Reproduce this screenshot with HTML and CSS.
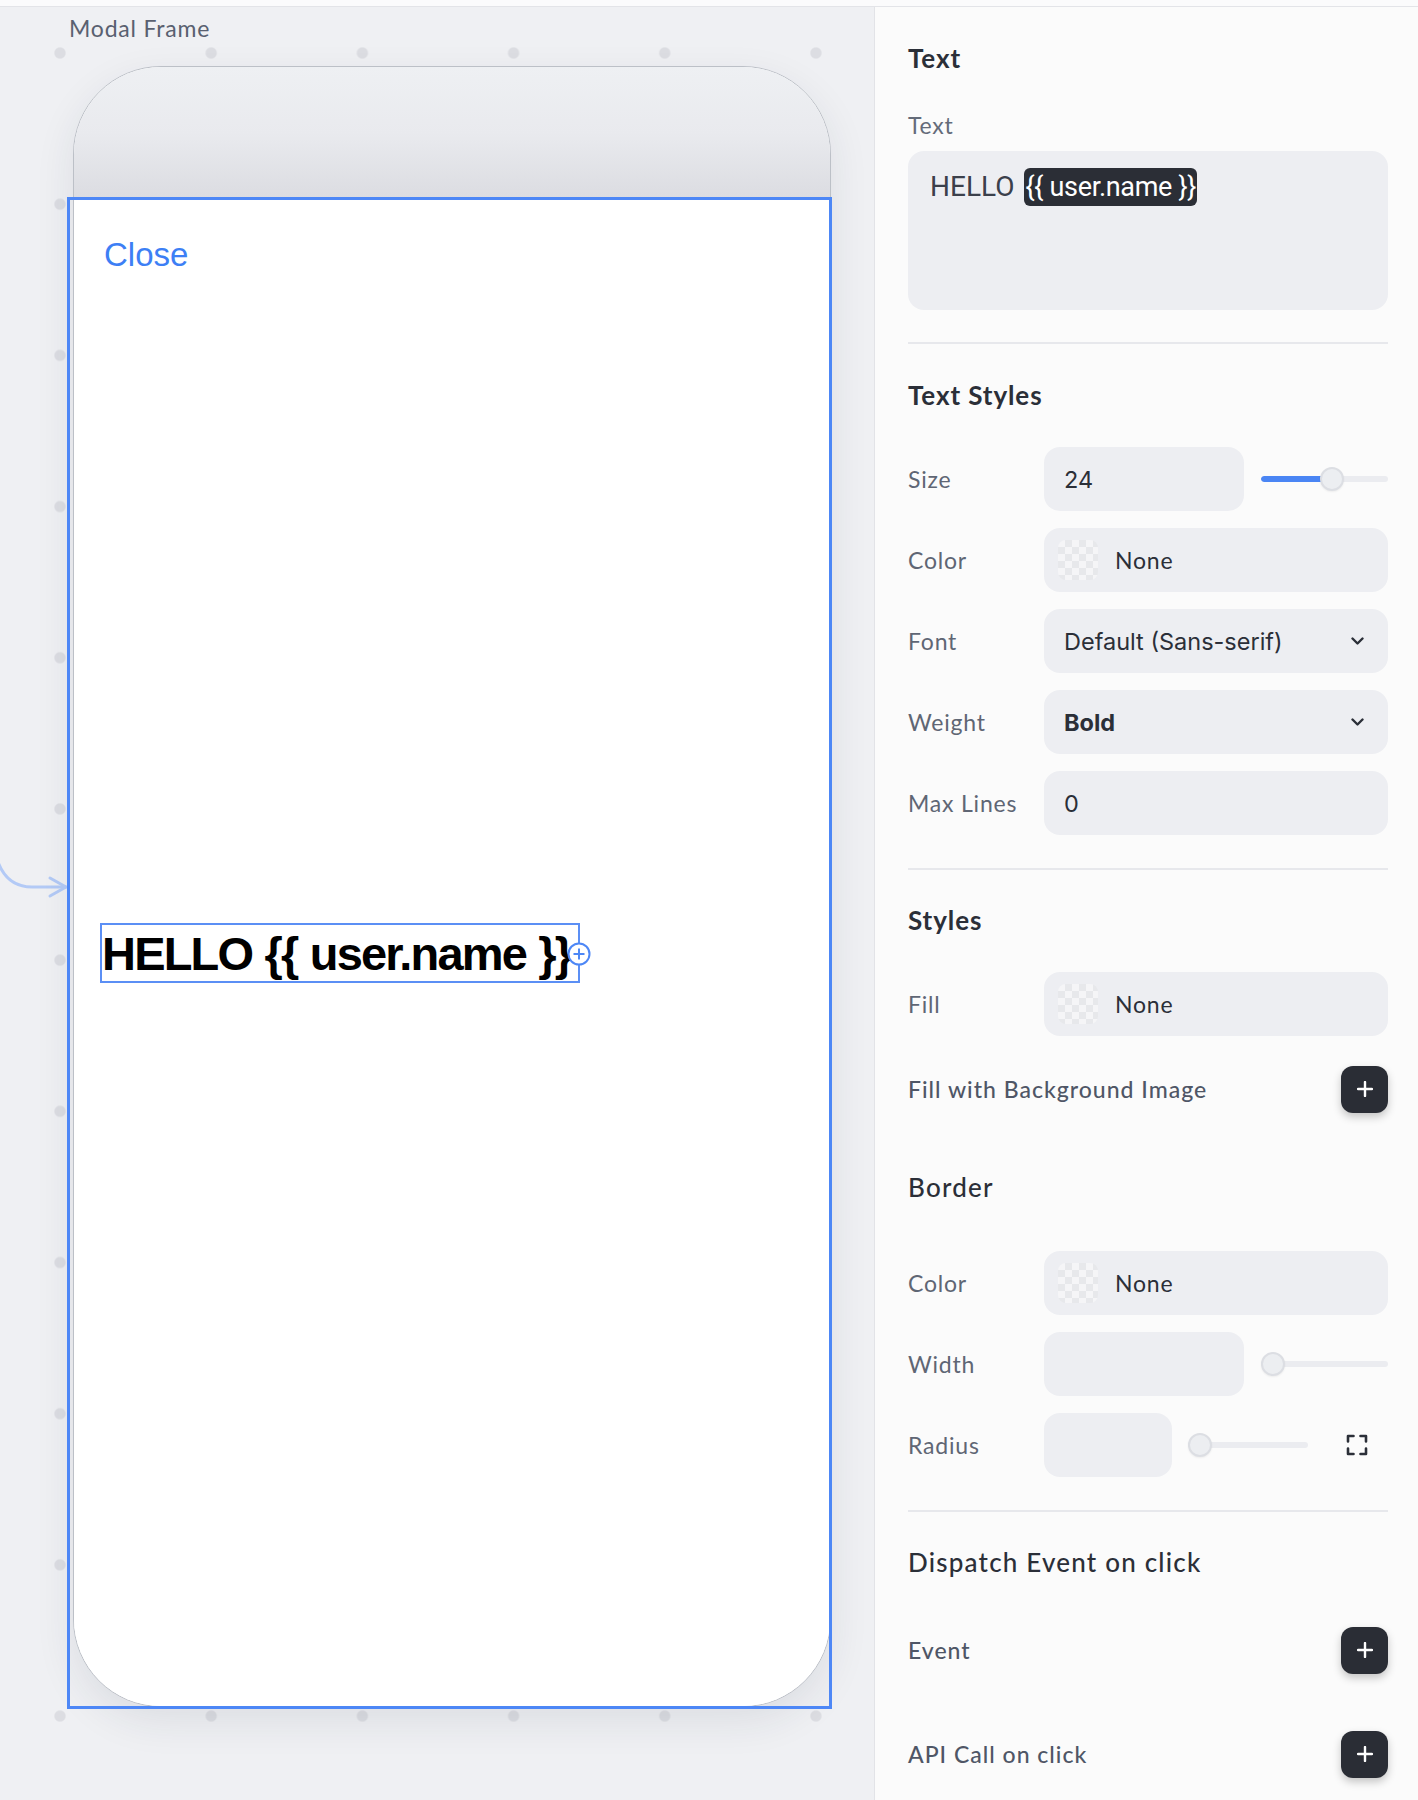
FILE: index.html
```html
<!DOCTYPE html>
<html lang="en">
<head>
<meta charset="utf-8">
<title>Modal Frame – Text properties</title>
<link rel="stylesheet" href="styles.css">
</head>
<body>
<div class="topbar"></div>
<div class="main">
  <section class="canvas">
    <div class="frame-label">Modal Frame</div>
    <svg class="connector" width="80" height="80" viewBox="0 0 80 80">
      <path d="M-6 13 C-2 39 10 54 32 54 L66 54" />
      <path d="M50 45 L66 54 L50 63" />
    </svg>
    <div class="phone">
      <div class="phone-head"></div>
      <div class="sheet">
        <div class="close">Close</div>
        <div class="text-node">HELLO {{ user.name }}<span class="add-handle"><svg width="24" height="24" viewBox="0 0 24 24"><circle cx="12" cy="12" r="10.5"/><path d="M12 6.5v11M6.5 12h11"/></svg></span></div>
      </div>
    </div>
    <div class="selection"></div>
  </section>

  <aside class="panel">
    <h2 class="sec-title">Text</h2>
    <div class="field-label">Text</div>
    <div class="textarea"><span class="plain">HELLO </span><span class="token">{{ user.name }}</span></div>
    <div class="divider"></div>

    <h2 class="sec-title sp-35">Text Styles</h2>
    <div class="rows sp-36">
      <div class="row">
        <span class="label">Size</span>
        <div class="control">
          <div class="input w200 value">24</div>
          <div class="slider ml17"><span class="track"><span class="fill" style="width:71px"></span></span><span class="thumb" style="left:59px"></span></div>
        </div>
      </div>
      <div class="row">
        <span class="label">Color</span>
        <div class="control">
          <div class="input full swatch-input"><span class="swatch"></span><span class="none">None</span></div>
        </div>
      </div>
      <div class="row">
        <span class="label">Font</span>
        <div class="control">
          <div class="input full select"><span class="value">Default (Sans-serif)</span><svg class="chev" width="13" height="8" viewBox="0 0 13 8"><path d="M1.5 1.5l5 5 5-5"/></svg></div>
        </div>
      </div>
      <div class="row">
        <span class="label">Weight</span>
        <div class="control">
          <div class="input full select"><span class="value bold">Bold</span><svg class="chev" width="13" height="8" viewBox="0 0 13 8"><path d="M1.5 1.5l5 5 5-5"/></svg></div>
        </div>
      </div>
      <div class="row">
        <span class="label">Max Lines</span>
        <div class="control">
          <div class="input full value">0</div>
        </div>
      </div>
    </div>
    <div class="divider sp-33"></div>

    <h2 class="sec-title sp-34">Styles</h2>
    <div class="rows sp-36">
      <div class="row">
        <span class="label">Fill</span>
        <div class="control">
          <div class="input full swatch-input"><span class="swatch"></span><span class="none">None</span></div>
        </div>
      </div>
    </div>
    <div class="action-row sp-29">
      <span class="action-label">Fill with Background Image</span>
      <button class="add-btn" type="button"><svg width="16" height="16" viewBox="0 0 16 16"><path d="M8 1v14M1 8h14"/></svg></button>
    </div>

    <h2 class="sec-title medium sp-58">Border</h2>
    <div class="rows sp-48">
      <div class="row">
        <span class="label">Color</span>
        <div class="control">
          <div class="input full swatch-input"><span class="swatch"></span><span class="none">None</span></div>
        </div>
      </div>
      <div class="row">
        <span class="label">Width</span>
        <div class="control">
          <div class="input w200"></div>
          <div class="slider ml17"><span class="track"></span><span class="thumb" style="left:0"></span></div>
        </div>
      </div>
      <div class="row">
        <span class="label">Radius</span>
        <div class="control">
          <div class="input w128"></div>
          <div class="slider ml16 w120"><span class="track"></span><span class="thumb" style="left:0"></span></div>
          <svg class="expand" width="22" height="22" viewBox="0 0 22 22"><path d="M2 7.5V2h5.5M14.5 2H20v5.5M20 14.5V20h-5.5M7.5 20H2v-5.5"/></svg>
        </div>
      </div>
    </div>
    <div class="divider sp-33"></div>

    <h2 class="sec-title medium sp-34">Dispatch Event on click</h2>
    <div class="action-row sp-48">
      <span class="action-label">Event</span>
      <button class="add-btn" type="button"><svg width="16" height="16" viewBox="0 0 16 16"><path d="M8 1v14M1 8h14"/></svg></button>
    </div>
    <div class="action-row sp-56">
      <span class="action-label">API Call on click</span>
      <button class="add-btn" type="button"><svg width="16" height="16" viewBox="0 0 16 16"><path d="M8 1v14M1 8h14"/></svg></button>
    </div>
  </aside>
</div>
</body>
</html>
```

FILE: styles.css
```css
* { box-sizing: border-box; }

html, body {
  margin: 0;
  padding: 0;
}

body {
  width: 1418px;
  height: 1800px;
  overflow: hidden;
  font-family: Lato, "Noto Sans", sans-serif;
  background: #eff0f3;
}

.topbar {
  height: 7px;
  background: #fbfbfc;
  border-bottom: 1px solid #e3e4e8;
}

.main {
  display: flex;
  height: 1793px;
}

/* ---------- canvas ---------- */
.canvas {
  position: relative;
  flex: 0 0 874px;
  overflow: hidden;
  background-color: #eff0f3;
  background-image: radial-gradient(circle at center, #dcdde2 0, #dcdde2 5px, rgba(220,221,226,0) 6.2px);
  background-size: 151.2px 151.2px;
  background-position: -15.6px -29.6px;
}

.frame-label {
  position: absolute;
  left: 69px;
  top: 7px;
  font-size: 23px;
  line-height: 28px;
  letter-spacing: 0.8px;
  color: #596070;
}

.connector {
  position: absolute;
  left: 0;
  top: 826px;
  fill: none;
  stroke: #b3caf6;
  stroke-width: 3;
  stroke-linecap: round;
  stroke-linejoin: round;
}

.phone {
  position: absolute;
  left: 73px;
  top: 59px;
  width: 758px;
  height: 1641px;
  border: 1px solid #bcc0c7;
  border-radius: 88px;
  overflow: hidden;
  display: flex;
  flex-direction: column;
  background: #ffffff;
  box-shadow: 0 14px 40px rgba(30, 40, 70, 0.09);
}

.phone-head {
  flex: 0 0 133px;
  background: linear-gradient(180deg, #eef0f3 0%, #e9eaee 50%, #dbdce1 100%);
}

.sheet {
  flex: 1;
  background: #ffffff;
  border-radius: 12px 12px 0 0;
  display: flex;
  flex-direction: column;
  align-items: flex-start;
  padding: 37px 0 0 26px;
  margin-top: -1px;
}

.close {
  margin-left: 4px;
  font-family: "Liberation Sans", Arial, sans-serif;
  font-size: 33px;
  line-height: 37px;
  color: #3d7ff5;
}

.text-node {
  position: relative;
  margin-top: 650px;
  border: 2px solid #5b8ff5;
  padding: 2px 7px 0 0;
  font-family: "Liberation Sans", Arial, sans-serif;
  font-weight: 700;
  font-size: 47px;
  line-height: 54px;
  letter-spacing: -1.8px;
  word-spacing: 1px;
  color: #000000;
  white-space: nowrap;
}

.add-handle {
  position: absolute;
  right: -13px;
  top: 50%;
  margin-top: -11px;
  width: 24px;
  height: 24px;
  line-height: 0;
  letter-spacing: 0;
}

.add-handle svg {
  fill: #ffffff;
  stroke: #4d87f6;
  stroke-width: 2;
}

.selection {
  position: absolute;
  left: 67px;
  top: 190px;
  width: 765px;
  height: 1512px;
  border: 3px solid #4d87f6;
  pointer-events: none;
}

/* ---------- panel ---------- */
.panel {
  flex: 1;
  background: #fbfbfb;
  border-left: 1px solid #e2e3e7;
  padding: 35px 30px 0 33px;
  display: flex;
  flex-direction: column;
  color: #2b2f38;
}

.sec-title {
  margin: 0;
  font-size: 26px;
  line-height: 32px;
  font-weight: 700;
  letter-spacing: 0.9px;
  color: #2b2f38;
}

.sec-title.medium {
  font-weight: 500;
  letter-spacing: 1.2px;
}

.field-label {
  margin-top: 37px;
  font-size: 23px;
  line-height: 28px;
  letter-spacing: 0.8px;
  color: #646b79;
}

.textarea {
  margin-top: 12px;
  height: 159px;
  border-radius: 16px;
  background: #edeef2;
  padding: 17px 22px 0 22px;
  font-family: Roboto, "Liberation Sans", sans-serif;
  font-size: 28px;
  line-height: 38px;
  color: #3b404b;
}

.token {
  display: inline-block;
  margin-left: 3px;
  padding: 0 1px;
  border-radius: 6px;
  background: #2b2e36;
  color: #ffffff;
  font-size: 27px;
  letter-spacing: -0.3px;
}

.divider {
  margin-top: 32px;
  height: 2px;
  background: #e7e8ec;
  flex: 0 0 2px;
}

.sp-29 { margin-top: 29px; }
.sp-33 { margin-top: 33px; }
.sp-34 { margin-top: 34px; }
.sp-35 { margin-top: 35px; }
.sp-36 { margin-top: 36px; }
.sp-48 { margin-top: 48px; }
.sp-56 { margin-top: 56px; }
.sp-58 { margin-top: 58px; }

.rows {
  display: flex;
  flex-direction: column;
  gap: 17px;
}

.row {
  display: grid;
  grid-template-columns: 136px 1fr;
  align-items: center;
  height: 64px;
}

.label {
  font-size: 23px;
  line-height: 28px;
  letter-spacing: 0.8px;
  color: #5f6674;
}

.control {
  display: flex;
  align-items: center;
  height: 64px;
}

.input {
  height: 64px;
  border-radius: 16px;
  background: #edeef2;
  display: flex;
  align-items: center;
}

.input.full { flex: 1; }
.input.w200 { flex: 0 0 200px; }
.input.w128 { flex: 0 0 128px; }

.value,
.input.value {
  font-family: Inter, "Liberation Sans", sans-serif;
  font-size: 23.5px;
  color: #2b2f38;
}

.input.value { padding-left: 20px; }

.value.bold { font-weight: 700; }

.select {
  padding: 0 24px 0 20px;
  justify-content: space-between;
}

.chev {
  fill: none;
  stroke: #2b2f38;
  stroke-width: 2.4;
  stroke-linecap: round;
  stroke-linejoin: round;
}

.swatch {
  width: 40px;
  height: 40px;
  margin-left: 14px;
  border-radius: 8px;
  background: repeating-conic-gradient(#e7e8eb 0% 25%, #f5f5f7 0% 50%) 0 0 / 14px 14px;
}

.none {
  margin-left: 17px;
  font-size: 23px;
  letter-spacing: 0.8px;
  color: #2b2f38;
}

.slider {
  position: relative;
  height: 24px;
  flex: 1;
  display: flex;
  align-items: center;
}

.slider.ml17 { margin-left: 17px; }
.slider.ml16 { margin-left: 16px; }
.slider.w120 { flex: 0 0 120px; }

.track {
  position: relative;
  display: block;
  width: 100%;
  height: 6px;
  border-radius: 3px;
  background: #ebecf0;
  overflow: hidden;
}

.fill {
  position: absolute;
  left: 0;
  top: 0;
  bottom: 0;
  background: #4a85f4;
  border-radius: 3px;
}

.thumb {
  position: absolute;
  top: 0;
  width: 24px;
  height: 24px;
  border-radius: 50%;
  background: #eceef1;
  border: 2px solid #dcdee3;
  box-shadow: 0 1px 2px rgba(0, 0, 0, 0.06);
}

.expand {
  margin-left: 38px;
  fill: none;
  stroke: #2b2f38;
  stroke-width: 2.6;
  stroke-linecap: round;
  stroke-linejoin: round;
}

.action-row {
  display: flex;
  align-items: center;
  justify-content: space-between;
  height: 48px;
}

.action-label {
  font-size: 23px;
  font-weight: 500;
  letter-spacing: 1px;
  line-height: 28px;
  color: #4f5666;
}

.add-btn {
  width: 47px;
  height: 47px;
  padding: 0;
  border: 0;
  border-radius: 12px;
  background: #2a2d35;
  box-shadow: 0 4px 8px rgba(0, 0, 0, 0.22);
  display: flex;
  align-items: center;
  justify-content: center;
}

.add-btn svg {
  fill: none;
  stroke: #ffffff;
  stroke-width: 2.4;
  stroke-linecap: round;
}
```
